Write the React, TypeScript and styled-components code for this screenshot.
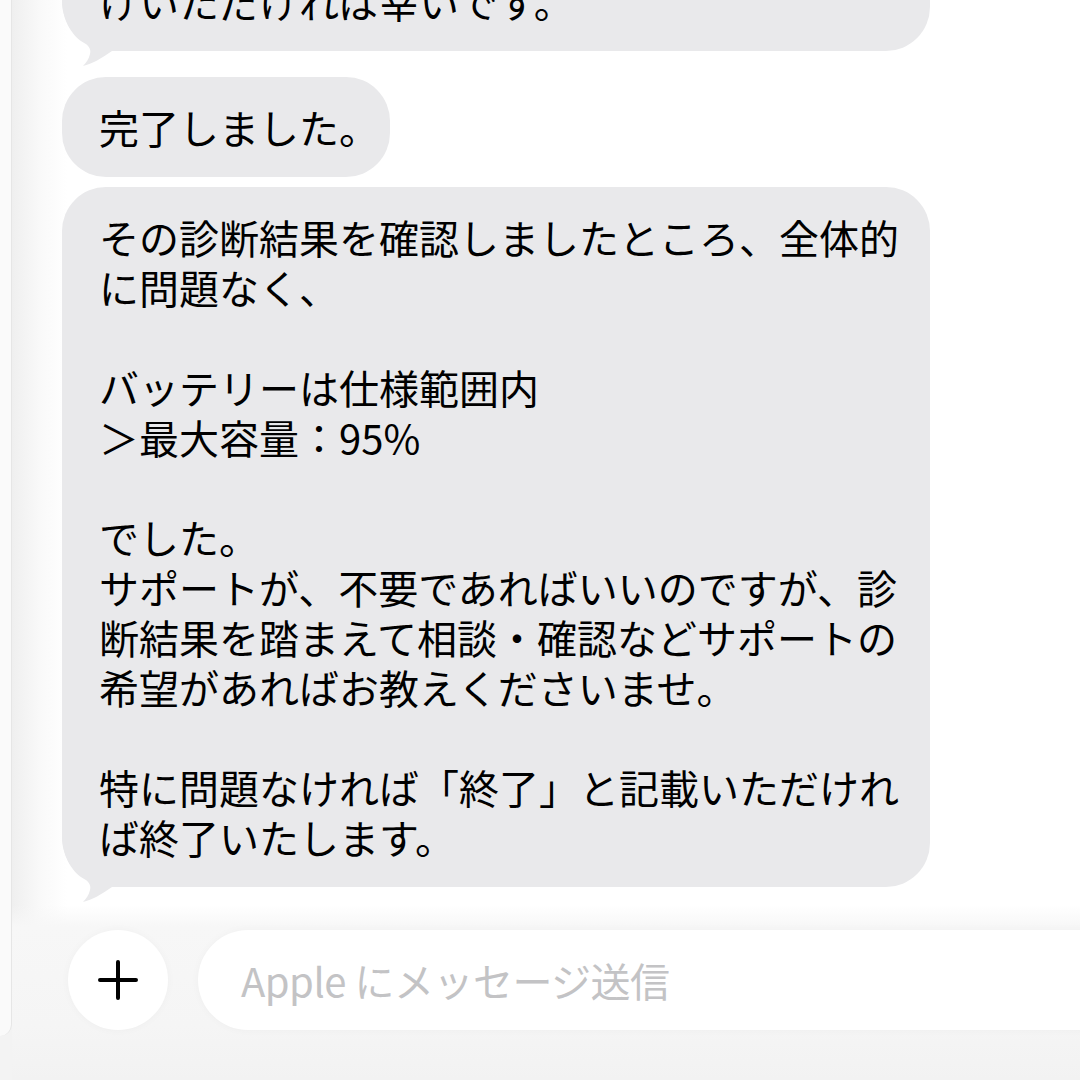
import React from "react";
import styled, { createGlobalStyle } from "styled-components";

const GlobalStyle = createGlobalStyle`
  html, body {
    margin: 0;
    padding: 0;
  }
  body {
    background: #f3f3f3;
    font-family: "Noto Sans CJK JP", "Noto Sans", sans-serif;
  }
`;

const Screen = styled.div`
  display: flex;
  width: 1080px;
  height: 1080px;
  overflow: hidden;
  background: #f3f3f3;
`;

// the sheet peeking out behind the chat on the left
const BackSheet = styled.div`
  flex: 0 0 11px;
  height: 1036px;
  background: #fafafa;
  border-right: 1px solid #e6e6e6;
  border-bottom-right-radius: 22px;
`;

const Chat = styled.main`
  flex: 1;
  min-width: 0;
  display: flex;
  flex-direction: column;
  overflow: hidden;
  background: linear-gradient(to right, #efefef 0, #f9f9f9 28px, #ffffff 55px);
`;

const Thread = styled.section`
  flex: 1;
  min-height: 0;
  overflow: hidden;
  display: flex;
  flex-direction: column;
  justify-content: flex-end;
  align-items: flex-start;
  padding: 0 0 18px 50px;
`;

const Bubble = styled.div<{ $w: number; $tail?: boolean }>`
  position: relative;
  isolation: isolate;
  flex-shrink: 0;
  box-sizing: border-box;
  width: ${(p) => p.$w}px;
  padding: 25px 0 25px 37px;
  border-radius: 44px;
  border-bottom-left-radius: ${(p) => (p.$tail ? "50px" : "44px")};
  margin-bottom: ${(p) => (p.$tail ? "26px" : "10px")};
  background: #e9e9eb;
  color: #000;
  font-size: 40px;
  line-height: 50px;
  white-space: pre;

  &:last-child {
    margin-bottom: 0;
  }
`;

const Tail = styled.svg`
  position: absolute;
  z-index: -1;
  left: 0;
  bottom: -16px;
  width: 50px;
  height: 66px;
  overflow: visible;
`;

const Composer = styled.footer`
  flex: 0 0 auto;
  display: flex;
  align-items: center;
  gap: 30px;
  padding: 25px 0 50px 56px;
  background: linear-gradient(
    to bottom,
    rgba(250, 250, 250, 0) 0,
    #f7f7f7 22px,
    #f5f5f5 120px,
    #f2f2f2 100%
  );
`;

const PlusButton = styled.button`
  flex: 0 0 100px;
  height: 100px;
  display: flex;
  align-items: center;
  justify-content: center;
  padding: 0;
  border: none;
  border-radius: 50%;
  background: #ffffff;
  box-shadow: 0 0 8px rgba(0, 0, 0, 0.03);
`;

const Field = styled.div`
  flex: 0 0 940px;
  height: 100px;
  box-sizing: border-box;
  display: flex;
  align-items: center;
  padding-left: 43px;
  border-radius: 50px;
  background: #ffffff;
  box-shadow: 0 0 8px rgba(0, 0, 0, 0.03);
  color: #c3c3c5;
  font-size: 40px;
  letter-spacing: -0.5px;
`;

const BubbleTail = () => (
  <Tail viewBox="0 -50 50 66">
    <path
      d="M0 -50 C1 -30 10 -14 24 -7 C28 -4 29 0 28 3 C27 8 24 12 21 15 C30 13 40 7 50 0 L50 -50 Z"
      fill="#e9e9eb"
    />
  </Tail>
);

const PlusIcon = () => (
  <svg width="40" height="40" viewBox="0 0 40 40">
    <path
      d="M20 2 V38 M2 20 H38"
      stroke="#000"
      strokeWidth="4"
      strokeLinecap="round"
      fill="none"
    />
  </svg>
);

type Message = { text: string; width: number; tail?: boolean };

const messages: Message[] = [
  {
    text: "診断が完了しましたら、こちらにお声が\nけいただければ幸いです。",
    width: 868,
    tail: true,
  },
  { text: "完了しました。", width: 328 },
  {
    text: [
      "その診断結果を確認しましたところ、全体的",
      "に問題なく、",
      "",
      "バッテリーは仕様範囲内",
      "＞最大容量：95%",
      "",
      "でした。",
      "サポートが、不要であればいいのですが、診",
      "断結果を踏まえて相談・確認などサポートの",
      "希望があればお教えくださいませ。",
      "",
      "特に問題なければ「終了」と記載いただけれ",
      "ば終了いたします。",
    ].join("\n"),
    width: 868,
    tail: true,
  },
];

export default function App() {
  return (
    <>
      <GlobalStyle />
      <Screen>
        <BackSheet />
        <Chat>
          <Thread>
            {messages.map((m, i) => (
              <Bubble key={i} $w={m.width} $tail={m.tail}>
                {m.text}
                {m.tail && <BubbleTail />}
              </Bubble>
            ))}
          </Thread>
          <Composer>
            <PlusButton type="button">
              <PlusIcon />
            </PlusButton>
            <Field>Apple にメッセージ送信</Field>
          </Composer>
        </Chat>
      </Screen>
    </>
  );
}
